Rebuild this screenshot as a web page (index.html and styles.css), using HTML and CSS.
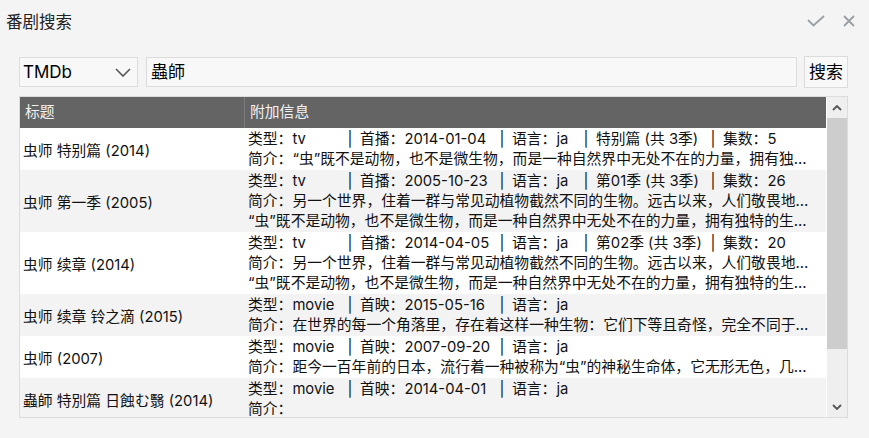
FILE: index.html
```html
<!DOCTYPE html>
<html lang="zh">
<head>
<meta charset="utf-8">
<title>番剧搜索</title>
<link rel="stylesheet" href="styles.css">
</head>
<body>
<div class="app">
  <div class="titlebar">
    <div class="title">番剧搜索</div>
    <svg class="ic-check" width="18" height="12" viewBox="0 0 18 12"><polyline points="1,5 6.5,10.5 17,1" fill="none" stroke="#9a9ea3" stroke-width="1.8"/></svg>
    <svg class="ic-close" width="12" height="12" viewBox="0 0 12 12"><path d="M1 1 L11 11 M11 1 L1 11" fill="none" stroke="#9a9ea3" stroke-width="1.8"/></svg>
  </div>

  <div class="searchbar">
    <div class="combo">
      <span class="combo-text">TMDb</span>
      <svg class="combo-arrow" width="16" height="9" viewBox="0 0 16 9"><polyline points="1,1 8,8 15,1" fill="none" stroke="#555" stroke-width="1.6"/></svg>
    </div>
    <div class="input">蟲師</div>
    <div class="btn">搜索</div>
  </div>

  <div class="table">
    <div class="table-main">
      <div class="thead">
        <div class="th th-title">标题</div>
        <div class="th th-info">附加信息</div>
      </div>

      <div class="row">
        <div class="cell-title">虫师 特别篇 (2014)</div>
        <div class="cell-info">
          <div class="line"><span class="f f-type">类型：tv</span><span class="sep">|</span><span class="f f-date">首播：2014-01-04</span><span class="sep">|</span><span class="f f-lang">语言：ja</span><span class="sep">|</span><span class="f f-season">特别篇 (共 3季)</span><span class="sep">|</span><span>集数：5</span></div>
          <div class="line">简介：“虫”既不是动物，也不是微生物，而是一种自然界中无处不在的力量，拥有独…</div>
        </div>
      </div>

      <div class="row alt">
        <div class="cell-title">虫师 第一季 (2005)</div>
        <div class="cell-info">
          <div class="line"><span class="f f-type">类型：tv</span><span class="sep">|</span><span class="f f-date">首播：2005-10-23</span><span class="sep">|</span><span class="f f-lang">语言：ja</span><span class="sep">|</span><span class="f f-season">第01季 (共 3季)</span><span class="sep">|</span><span>集数：26</span></div>
          <div class="line">简介：另一个世界，住着一群与常见动植物截然不同的生物。远古以来，人们敬畏地…</div>
          <div class="line">“虫”既不是动物，也不是微生物，而是一种自然界中无处不在的力量，拥有独特的生…</div>
        </div>
      </div>

      <div class="row">
        <div class="cell-title">虫师 续章 (2014)</div>
        <div class="cell-info">
          <div class="line"><span class="f f-type">类型：tv</span><span class="sep">|</span><span class="f f-date">首播：2014-04-05</span><span class="sep">|</span><span class="f f-lang">语言：ja</span><span class="sep">|</span><span class="f f-season">第02季 (共 3季)</span><span class="sep">|</span><span>集数：20</span></div>
          <div class="line">简介：另一个世界，住着一群与常见动植物截然不同的生物。远古以来，人们敬畏地…</div>
          <div class="line">“虫”既不是动物，也不是微生物，而是一种自然界中无处不在的力量，拥有独特的生…</div>
        </div>
      </div>

      <div class="row alt">
        <div class="cell-title">虫师 续章 铃之滴 (2015)</div>
        <div class="cell-info">
          <div class="line"><span class="f f-type">类型：movie</span><span class="sep">|</span><span class="f f-date">首映：2015-05-16</span><span class="sep">|</span><span>语言：ja</span></div>
          <div class="line">简介：在世界的每一个角落里，存在着这样一种生物：它们下等且奇怪，完全不同于…</div>
        </div>
      </div>

      <div class="row">
        <div class="cell-title">虫师 (2007)</div>
        <div class="cell-info">
          <div class="line"><span class="f f-type">类型：movie</span><span class="sep">|</span><span class="f f-date">首映：2007-09-20</span><span class="sep">|</span><span>语言：ja</span></div>
          <div class="line">简介：距今一百年前的日本，流行着一种被称为“虫”的神秘生命体，它无形无色，几…</div>
        </div>
      </div>

      <div class="row alt">
        <div class="cell-title">蟲師 特別篇 日蝕む翳 (2014)</div>
        <div class="cell-info">
          <div class="line"><span class="f f-type">类型：movie</span><span class="sep">|</span><span class="f f-date">首映：2014-04-01</span><span class="sep">|</span><span>语言：ja</span></div>
          <div class="line">简介：</div>
        </div>
      </div>
    </div>

    <div class="scrollbar">
      <div class="sb-btn">
        <svg width="10" height="6" viewBox="0 0 10 6"><polyline points="1,5 5,1 9,5" fill="none" stroke="#555" stroke-width="1.8"/></svg>
      </div>
      <div class="sb-track">
        <div class="sb-thumb"></div>
      </div>
      <div class="sb-btn">
        <svg width="10" height="6" viewBox="0 0 10 6"><polyline points="1,1 5,5 9,1" fill="none" stroke="#555" stroke-width="1.8"/></svg>
      </div>
    </div>
  </div>
</div>
</body>
</html>
```

FILE: styles.css
```css
* {
  box-sizing: border-box;
}

html, body {
  margin: 0;
  padding: 0;
}

body {
  width: 869px;
  height: 438px;
  overflow: hidden;
  background: #f4f4f4;
  font-family: "Inter", "Noto Sans CJK SC", sans-serif;
  color: #111;
}

.app {
  display: flex;
  flex-direction: column;
  height: 438px;
}

.titlebar {
  display: flex;
  align-items: center;
  height: 40px;
  padding: 1px 14px 0 6px;
}

.title {
  flex: 1;
  font-size: 16.5px;
  color: #222;
}

.ic-check {
  margin-right: 18px;
}

.searchbar {
  display: flex;
  align-items: center;
  height: 32px;
  margin: 16px 21px 0 19px;
  font-size: 17px;
  color: #000;
}

.combo {
  display: flex;
  align-items: center;
  width: 119px;
  height: 30px;
  border: 1px solid #dcdcdc;
  background: #f8f8f8;
  padding: 0 5px 0 3px;
}

.combo-text {
  flex: 1;
}

.combo-arrow {
  margin-right: 1px;
}

.input {
  flex: 1;
  height: 30px;
  margin-left: 8px;
  border: 1px solid #dcdcdc;
  background: #f8f8f8;
  padding: 0 4px;
  line-height: 28px;
}

.btn {
  width: 44px;
  height: 32px;
  margin-left: 7px;
  border: 1px solid #dcdcdc;
  background: #f8f8f8;
  text-align: center;
  line-height: 30px;
}

.table {
  display: flex;
  height: 322px;
  margin: 8px 21px 0 19px;
  border: 1px solid #dcdcdc;
  background: #ffffff;
  overflow: hidden;
}

.table-main {
  flex: 1;
  min-width: 0;
  overflow: hidden;
  font-size: 14.8px;
}

.thead {
  display: grid;
  grid-template-columns: 225px 1fr;
  height: 31px;
  background: #646464;
  color: #f2f2f2;
}

.th {
  line-height: 30px;
  white-space: nowrap;
}

.th-title {
  padding-left: 5px;
  border-right: 1px solid #7c7c7c;
}

.th-info {
  padding-left: 5px;
}

.row {
  display: grid;
  grid-template-columns: 225px 1fr;
  background: #ffffff;
}

.row.alt {
  background: #f3f3f3;
}

.cell-title {
  display: flex;
  align-items: center;
  padding-left: 3px;
  white-space: nowrap;
  color: #111;
}

.cell-info {
  padding: 1px 6px 1px 3px;
  min-width: 0;
}

.line {
  height: 20px;
  line-height: 20px;
  white-space: nowrap;
  overflow: hidden;
  color: #111;
}

.f {
  display: inline-block;
}

.f-type {
  width: 92px;
}

.f-date {
  width: 132px;
}

.f-lang {
  width: 64px;
}

.f-season {
  width: 107px;
}

.sep {
  display: inline-block;
  width: 20px;
  text-align: center;
}

.scrollbar {
  display: flex;
  flex-direction: column;
  width: 21px;
  border-left: 1px solid #ffffff;
  background: #efefef;
}

.sb-btn {
  display: flex;
  align-items: center;
  justify-content: center;
  height: 21px;
}

.sb-track {
  flex: 1;
}

.sb-thumb {
  height: 231px;
  background: #cdcdcd;
}
```
